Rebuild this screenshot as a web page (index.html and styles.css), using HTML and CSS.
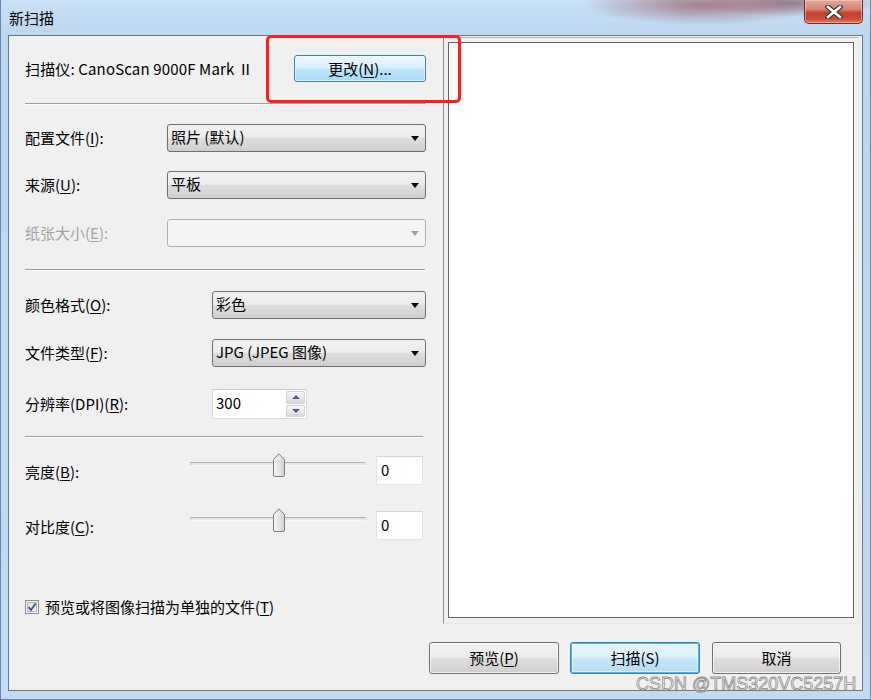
FILE: index.html
```html
<!DOCTYPE html>
<html lang="zh-CN">
<head>
<meta charset="utf-8">
<title>新扫描</title>
<link rel="stylesheet" href="styles.css">
</head>
<body>
<div class="window">
  <div class="titlebar">
    <span class="title">新扫描</span>
    <div class="close">
      <svg width="18" height="14" viewBox="0 0 18 14">
        <path d="M3 2 L15 12 M15 2 L3 12" stroke="#3a3a3a" stroke-width="5" stroke-linecap="square" fill="none"/>
        <path d="M3 2 L15 12 M15 2 L3 12" stroke="#ffffff" stroke-width="2.6" stroke-linecap="square" fill="none"/>
      </svg>
    </div>
  </div>
  <div class="client">
    <div class="form">
      <div class="row row-scanner">
        <span class="scanner">扫描仪: CanoScan 9000F Mark Ⅱ</span>
        <div class="btn btn-hot btn-change">更改(<u>N</u>)...</div>
      </div>
      <div class="sep sep-a"></div>
      <div class="row row-combo r1">
        <span class="label lw1">配置文件(<u>I</u>):</span>
        <div class="combo"><span class="combo-text">照片 (默认)</span><span class="arrow"></span></div>
      </div>
      <div class="row row-combo r2">
        <span class="label lw1">来源(<u>U</u>):</span>
        <div class="combo"><span class="combo-text">平板</span><span class="arrow"></span></div>
      </div>
      <div class="row row-combo r3">
        <span class="label lw1 disabled">纸张大小(<u>E</u>):</span>
        <div class="combo combo-disabled"><span class="combo-text"></span><span class="arrow"></span></div>
      </div>
      <div class="sep sep-b"></div>
      <div class="row row-combo r4">
        <span class="label lw2">颜色格式(<u>O</u>):</span>
        <div class="combo"><span class="combo-text">彩色</span><span class="arrow"></span></div>
      </div>
      <div class="row row-combo r5">
        <span class="label lw2">文件类型(<u>F</u>):</span>
        <div class="combo"><span class="combo-text">JPG (JPEG 图像)</span><span class="arrow"></span></div>
      </div>
      <div class="row row-spin">
        <span class="label lw2">分辨率(DPI)(<u>R</u>):</span>
        <div class="spin">
          <span class="spin-value">300</span>
          <div class="spin-btns">
            <span class="spin-btn"><span class="tri-up"></span></span>
            <span class="spin-btn"><span class="tri-down"></span></span>
          </div>
        </div>
      </div>
      <div class="sep sep-c"></div>
      <div class="row row-slider s1">
        <span class="label lw3">亮度(<u>B</u>):</span>
        <div class="slider">
          <div class="track"></div>
          <svg class="thumb" width="12" height="24" viewBox="0 0 12 24">
            <defs><linearGradient id="tg1" x1="0" y1="0" x2="1" y2="0"><stop offset="0" stop-color="#f7f7f7"/><stop offset="1" stop-color="#d2d2d2"/></linearGradient></defs>
            <path d="M0.5 22 V6.5 L6 0.8 L11.5 6.5 V22 Q11.5 23.5 10 23.5 H2 Q0.5 23.5 0.5 22 Z" fill="url(#tg1)" stroke="#7d7d7d"/>
          </svg>
        </div>
        <div class="numbox">0</div>
      </div>
      <div class="row row-slider s2">
        <span class="label lw3">对比度(<u>C</u>):</span>
        <div class="slider">
          <div class="track"></div>
          <svg class="thumb" width="12" height="24" viewBox="0 0 12 24">
            <defs><linearGradient id="tg2" x1="0" y1="0" x2="1" y2="0"><stop offset="0" stop-color="#f7f7f7"/><stop offset="1" stop-color="#d2d2d2"/></linearGradient></defs>
            <path d="M0.5 22 V6.5 L6 0.8 L11.5 6.5 V22 Q11.5 23.5 10 23.5 H2 Q0.5 23.5 0.5 22 Z" fill="url(#tg2)" stroke="#7d7d7d"/>
          </svg>
        </div>
        <div class="numbox">0</div>
      </div>
      <div class="row row-check">
        <svg class="checkbox" width="14" height="14" viewBox="0 0 14 14">
          <defs><linearGradient id="cg" x1="0" y1="0" x2="1" y2="1"><stop offset="0" stop-color="#dcdcdc"/><stop offset="1" stop-color="#f8f8f8"/></linearGradient></defs>
          <rect x="0.5" y="0.5" width="13" height="13" fill="#f4f4f4" stroke="#8e8f8f"/>
          <rect x="2.5" y="2.5" width="9" height="9" fill="url(#cg)" stroke="#b5b5b5"/>
          <path d="M3.6 7.2 L6 10 L10.6 3.4" stroke="#3e5592" stroke-width="1.8" fill="none"/>
        </svg>
        <span class="check-label">预览或将图像扫描为单独的文件(<u>T</u>)</span>
      </div>
    </div>
    <div class="preview"><div class="preview-inner"></div></div>
    <div class="actions">
      <div class="btn btn-normal b-preview">预览(<u>P</u>)</div>
      <div class="btn btn-default b-scan">扫描(S)</div>
      <div class="btn btn-normal b-cancel">取消</div>
    </div>
    <div class="annotation"></div>
    <div class="watermark">CSDN @TMS320VC5257H</div>
  </div>
</div>
</body>
</html>
```

FILE: styles.css
```css
* { box-sizing: border-box; }
html, body { margin: 0; padding: 0; }
body {
  width: 871px;
  height: 700px;
  overflow: hidden;
  font-family: "Noto Sans CJK SC", sans-serif;
  font-size: 15px;
  color: #000;
  background: #c4dbf1;
}
u { text-decoration: underline; text-underline-offset: 2px; }

.window {
  width: 871px;
  height: 700px;
  display: flex;
  flex-direction: column;
  padding: 0 7px 8px 7px;
  border: 1px solid #6e86a3;
  border-top: none;
  background:
    radial-gradient(ellipse 120px 20px at 700px 5px, rgba(150, 85, 95, 0.7), rgba(150, 85, 95, 0) 100%),
    radial-gradient(ellipse 90px 14px at 790px 3px, rgba(120, 70, 80, 0.6), rgba(120, 70, 80, 0) 100%),
    linear-gradient(180deg, #cae1f6 0%, #bcd7f0 5%, #c2daf2 100%);
}

.titlebar {
  height: 35px;
  flex: none;
  display: flex;
  align-items: center;
  justify-content: space-between;
}
.title {
  padding-left: 1px;
  font-size: 15px;
  line-height: 20px;
  color: #000;
}
.close {
  align-self: flex-start;
  width: 59px;
  height: 24px;
  border: 1px solid #6b2a22;
  border-top: none;
  border-radius: 0 0 5px 5px;
  background: linear-gradient(180deg, #e4a599 0%, #d88575 40%, #c4432f 55%, #c84a34 80%, #dc7a5a 100%);
  display: flex;
  align-items: center;
  justify-content: center;
  box-shadow: inset 0 0 0 1px rgba(255, 220, 210, 0.5);
}

.client {
  flex: 1;
  position: relative;
  border: 1px solid #6f7884;
  background: #f0f0f0;
  display: grid;
  grid-template-columns: 434px 416px;
  grid-template-rows: 588px 1fr;
}

.form {
  padding: 0 17px 0 16px;
  display: flex;
  flex-direction: column;
}
.row {
  display: flex;
  align-items: center;
  line-height: 20px;
}
.row-scanner { margin-top: 19px; height: 27px; justify-content: space-between; }
.scanner { white-space: nowrap; letter-spacing: 0.15px; }

.sep {
  height: 2px;
  border-top: 1px solid #a0a0a0;
  border-bottom: 1px solid #ffffff;
}
.sep-a { margin-top: 21px; width: 400px; }
.sep-b { margin-top: 22px; width: 400px; }
.sep-c { margin-top: 17px; width: 398px; }

.row-combo { height: 28px; }
.r1 { margin-top: 19px; }
.r2 { margin-top: 19px; }
.r3 { margin-top: 20px; }
.r4 { margin-top: 20px; }
.r5 { margin-top: 20px; }
.row-spin { margin-top: 22px; height: 30px; }
.row-slider { height: 29px; align-items: flex-start; }
.s1 { margin-top: 18px; }
.s2 { margin-top: 26px; }
.row-check { margin-top: 59px; height: 15px; }

.label { flex: none; white-space: nowrap; }
.row-slider .label { align-self: center; padding-top: 3px; }
.lw1 { width: 142px; }
.lw2 { width: 187px; }
.lw3 { width: 165px; }
.disabled { color: #a3a3a3; }

.combo {
  flex: 1;
  height: 100%;
  border: 1px solid #707070;
  border-radius: 3px;
  background: linear-gradient(180deg, #f2f2f2 0%, #ebebeb 48%, #dddddd 52%, #cfcfcf 100%);
  display: flex;
  align-items: center;
  justify-content: space-between;
  padding: 0 6px 0 3px;
}
.combo-text { white-space: nowrap; line-height: 20px; margin-top: -2px; }
.arrow {
  width: 0;
  height: 0;
  border-left: 4.5px solid transparent;
  border-right: 4.5px solid transparent;
  border-top: 5px solid #000;
}
.combo-disabled {
  border-color: #adb2b5;
  background: #f4f4f4;
}
.combo-disabled .arrow { border-top-color: #a0a0a0; }

.spin {
  width: 95px;
  height: 100%;
  border: 1px solid #dadada;
  border-top-color: #c8c8c8;
  background: #fff;
  display: flex;
  justify-content: space-between;
  padding: 1px 1px 1px 3px;
}
.spin-value { line-height: 24px; }
.spin-btns {
  width: 19px;
  display: flex;
  flex-direction: column;
  gap: 1px;
}
.spin-btn {
  flex: 1;
  border: 1px solid #d2d2d2;
  border-radius: 2px;
  background: linear-gradient(180deg, #f6f6f6 0%, #e8e8e8 50%, #d9d9d9 100%);
  display: flex;
  align-items: center;
  justify-content: center;
}
.tri-up {
  width: 0; height: 0;
  border-left: 4px solid transparent;
  border-right: 4px solid transparent;
  border-bottom: 4px solid #4b5f8e;
}
.tri-down {
  width: 0; height: 0;
  border-left: 4px solid transparent;
  border-right: 4px solid transparent;
  border-top: 4px solid #4b5f8e;
}

.slider {
  position: relative;
  width: 176px;
  height: 24px;
  margin-top: -3px;
  flex: none;
}
.track {
  position: absolute;
  left: 0;
  right: 0;
  top: 9px;
  height: 4px;
  border-top: 1px solid #b0b0b0;
  border-left: 1px solid #c4c4c4;
  border-bottom: 1px solid #f8f8f8;
  border-right: 1px solid #e0e0e0;
  background: #e6e6e6;
}
.thumb {
  position: absolute;
  left: 83px;
  top: 0;
}
.numbox {
  margin-left: 10px;
  width: 47px;
  height: 29px;
  border: 1px solid #e0e3e8;
  border-top-color: #d2d5da;
  background: #fff;
  padding: 1px 4px;
  line-height: 24px;
}

.checkbox { flex: none; margin-right: 6px; }
.check-label { white-space: nowrap; }

.preview {
  margin-top: 1px;
  height: 587px;
  border: 1px solid #e3e3e3;
  border-left-color: #8e8e8e;
  border-top-color: #b9b9b9;
  padding: 4px 4px 5px 4px;
}
.preview-inner {
  width: 100%;
  height: 100%;
  background: #fff;
  border: 1px solid #646464;
}

.actions {
  grid-column: 1 / -1;
  display: flex;
  justify-content: flex-end;
  padding: 18px 18px 0 0;
}
.btn {
  display: flex;
  align-items: center;
  justify-content: center;
  border-radius: 3px;
  white-space: nowrap;
  line-height: 20px;
}
.btn-normal {
  border: 1px solid #707070;
  background: linear-gradient(180deg, #f2f2f2 0%, #ebebeb 48%, #dddddd 52%, #cfcfcf 100%);
  box-shadow: inset 0 0 0 1px rgba(255, 255, 255, 0.7);
}
.btn-hot {
  border: 1px solid #3c7fb1;
  background: linear-gradient(180deg, #eaf6fd 0%, #d9f0fc 48%, #bee6fd 52%, #a7d9f5 100%);
  box-shadow: inset 0 0 0 1px rgba(255, 255, 255, 0.6);
}
.btn-default {
  border: 1px solid #3c7fb1;
  background: linear-gradient(180deg, #e6f4fc 0%, #dcf0fb 48%, #c5e6f8 52%, #b4dcf3 100%);
  box-shadow: inset 0 0 0 1px #48b7f2, inset 0 0 0 2px rgba(255, 255, 255, 0.5);
}
.btn-change { width: 132px; height: 27px; }
.b-preview { width: 130px; height: 32px; }
.b-scan { width: 130px; height: 32px; margin-left: 11px; }
.b-cancel { width: 129px; height: 32px; margin-left: 12px; }

.annotation {
  position: absolute;
  left: 257px;
  top: -1px;
  width: 195px;
  height: 68px;
  border: 3px solid #ff1e1e;
  border-radius: 5px;
  pointer-events: none;
}
.watermark {
  position: absolute;
  left: 627px;
  top: 639px;
  font-family: "Liberation Sans", sans-serif;
  font-size: 18px;
  line-height: 18px;
  color: rgba(255, 255, 255, 0.85);
  -webkit-text-stroke: 0.8px #8c8c8c;
  white-space: nowrap;
}
```
